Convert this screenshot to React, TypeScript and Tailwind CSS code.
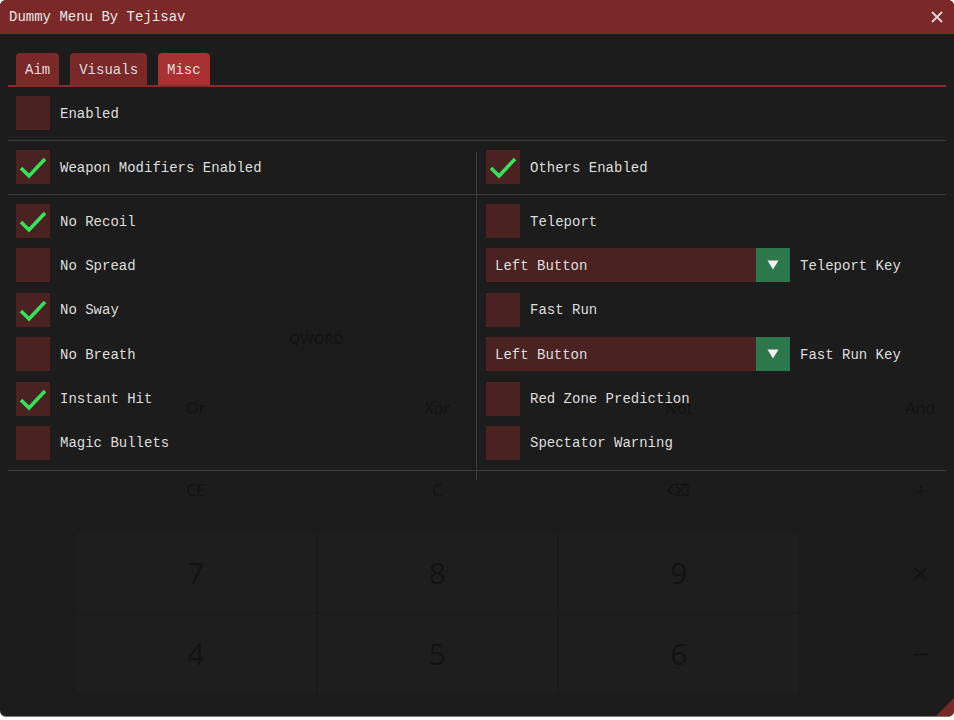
import React from "react";

type Item = { label: string; checked?: boolean; combo?: string };

const leftItems: Item[] = [
    { label: "No Recoil", checked: true },
    { label: "No Spread" },
    { label: "No Sway", checked: true },
    { label: "No Breath" },
    { label: "Instant Hit", checked: true },
    { label: "Magic Bullets" },
];

const rightItems: Item[] = [
    { label: "Teleport" },
    { label: "Teleport Key", combo: "Left Button" },
    { label: "Fast Run" },
    { label: "Fast Run Key", combo: "Left Button" },
    { label: "Red Zone Prediction" },
    { label: "Spectator Warning" },
];

function Checkbox({ label, checked }: { label: string; checked?: boolean }) {
    return (
        <div className="flex items-center gap-[10px] h-[34px]">
            <div className="w-[34px] h-[34px] bg-[#4b2222] flex items-center justify-center shrink-0">
                {checked && (
                    <svg width="34" height="34" viewBox="0 0 34 34">
                        <path d="M5 18 L13 26 L29 9" fill="none" stroke="#34e35a" strokeWidth="3.6" />
                    </svg>
                )}
            </div>
            <span className="mt-[2px]">{label}</span>
        </div>
    );
}

function Combo({ label, value }: { label: string; value: string }) {
    return (
        <div className="flex items-center gap-[10px] h-[34px]">
            <div className="w-[304px] h-[34px] bg-[#4b2222] flex items-center">
                <span className="flex-1 pl-[9px] mt-[2px]">{value}</span>
                <div className="w-[34px] h-[34px] bg-[#2c774c] flex items-center justify-center">
                    <svg width="12" height="10" viewBox="0 0 12 10">
                        <path d="M0.5 0.5 L11.5 0.5 L6 9.5 Z" fill="#f2f2f2" />
                    </svg>
                </div>
            </div>
            <span className="mt-[2px]">{label}</span>
        </div>
    );
}

function Row({ item }: { item: Item }) {
    if (item.combo) return <Combo label={item.label} value={item.combo} />;
    return <Checkbox label={item.label} checked={item.checked} />;
}

function Separator() {
    return <div className="h-px bg-[#3b3b40] mt-[10px] mb-[9px]" />;
}

// faint calculator seen through the translucent window
function GhostCalculator() {
    const ghost = "text-[#131313] font-['Open_Sans',sans-serif]";
    return (
        <div className="absolute inset-0 pointer-events-none">
            <div className={`absolute left-[75px] top-[328px] w-[483px] text-center text-[14px] font-semibold ${ghost}`}>
                QWORD
            </div>
            <div className="absolute left-[75px] top-[396px] w-[966px] grid grid-cols-4">
                {["Or", "Xor", "Not", "And"].map((t) => (
                    <div key={t} className={`text-center text-[16px] h-[24px] ${ghost}`}>{t}</div>
                ))}
            </div>
            <div className="absolute left-[75px] top-[478px] w-[966px] grid grid-cols-4">
                {["CE", "C", "⌫", "÷"].map((t) => (
                    <div key={t} className={`text-center text-[16px] h-[24px] ${ghost}`}>{t}</div>
                ))}
            </div>
            <div className="absolute left-[75px] top-[532px] w-[966px] grid grid-cols-4">
                {["7", "8", "9", "×", "4", "5", "6", "−"].map((t, i) => (
                    <div
                        key={i}
                        className={`h-[81px] flex items-center justify-center text-[30px] border border-[#1b1b1b] ${
                            i % 4 === 3 ? "bg-transparent" : "bg-[#1e1e1e]"
                        } ${ghost}`}
                    >
                        {t}
                    </div>
                ))}
            </div>
        </div>
    );
}

export default function App() {
    return (
        <div className="w-[954px] h-[720px] bg-white font-['Liberation_Mono',monospace] text-[14px] text-[#dedede]">
            <div className="relative w-[954px] h-[717px] bg-[#1c1c1c] rounded-[6px] overflow-hidden border-b border-[#777]">
                {/* Title bar */}
                <div className="h-[34px] bg-[#7a2828] flex items-center justify-between pl-[9px] pr-[10px]">
                    <span className="text-[#e8e8e8] mt-[1px]">Dummy Menu By Tejisav</span>
                    <svg width="14" height="14" viewBox="0 0 14 14">
                        <path d="M2 2 L12 12 M12 2 L2 12" stroke="#e6d8d8" strokeWidth="1.8" />
                    </svg>
                </div>

                <GhostCalculator />

                <div className="relative px-[8px]">
                    {/* Tabs */}
                    <div className="flex gap-[11px] pl-[8px] mt-[19px]">
                        <div className="h-[32px] px-[9px] pt-[2px] flex items-center bg-[#7a2828] rounded-t-[4px]">Aim</div>
                        <div className="h-[32px] px-[9px] pt-[2px] flex items-center bg-[#7a2828] rounded-t-[4px]">Visuals</div>
                        <div className="h-[32px] px-[9px] pt-[2px] flex items-center bg-[#a83232] rounded-t-[4px]">Misc</div>
                    </div>
                    <div className="h-[2px] bg-[#8a2b2b]" />

                    <div className="pl-[8px] mt-[9px]">
                        <Checkbox label="Enabled" />
                    </div>
                    <Separator />

                    {/* Columns */}
                    <div className="grid grid-cols-2">
                        <div className="border-r border-[#3b3b40] mt-[2px]">
                            <div className="pl-[8px] -mt-[2px]">
                                <Checkbox label="Weapon Modifiers Enabled" checked />
                            </div>
                            <Separator />
                            <div className="pl-[8px] flex flex-col gap-[10.4px]">
                                {leftItems.map((it) => (
                                    <Row key={it.label} item={it} />
                                ))}
                            </div>
                            <Separator />
                        </div>
                        <div>
                            <div className="pl-[9px]">
                                <Checkbox label="Others Enabled" checked />
                            </div>
                            <Separator />
                            <div className="pl-[9px] flex flex-col gap-[10.4px]">
                                {rightItems.map((it) => (
                                    <Row key={it.label} item={it} />
                                ))}
                            </div>
                            <Separator />
                        </div>
                    </div>
                </div>

                {/* Resize grip */}
                <svg className="absolute right-0 bottom-0" width="18" height="18" viewBox="0 0 18 18">
                    <path d="M18 0 L18 18 L0 18 Z" fill="#7a2828" />
                </svg>
            </div>
        </div>
    );
}
